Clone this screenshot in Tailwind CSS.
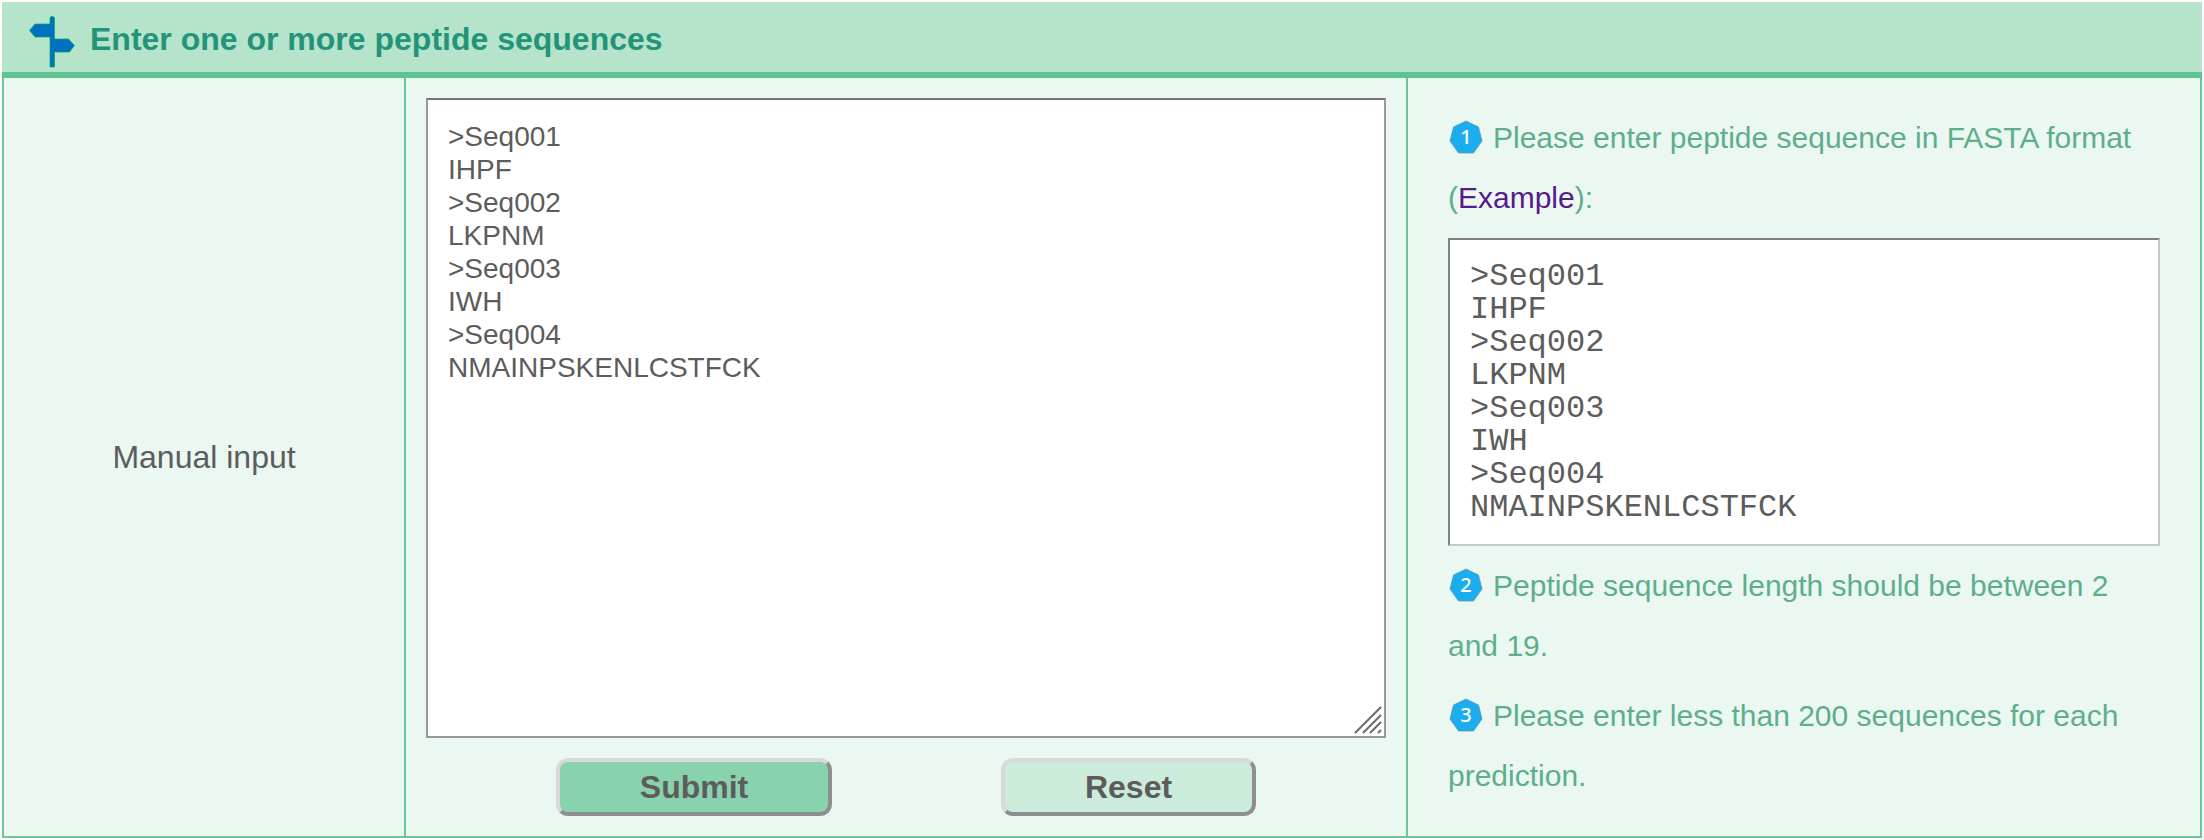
<!DOCTYPE html>
<html lang="en">
<head>
  <meta charset="UTF-8" />
  <meta name="viewport" content="width=device-width, initial-scale=1.0" />
  <title>Peptide sequence input</title>
  <script src="https://cdn.jsdelivr.net/npm/@tailwindcss/browser@4"></script>
</head>
<body class="bg-white p-[2px] font-['Liberation_Sans',Arial,sans-serif] text-[#5c5c5c]">
  <form onsubmit="return false">
    <!-- Header -->
    <header class="flex items-center gap-[14px] h-[76px] pl-6 bg-[#b5e4ca] border-b-[6px] border-[#5fc48f]">
      <svg class="w-[50px] h-[54px] mt-2" viewBox="0 0 50 54" fill="#0070c0" stroke="#00b050" stroke-width="0.7">
        <path d="M24 3.500L26 2L28.500 3.500V25H42.500L48.500 31.500L43.500 38H28.500V53H24V23H9L3.500 16.500L9 10H24Z" />
      </svg>
      <h1 class="pt-[3px] text-[32px] leading-9 font-bold text-[#24937b]">Enter one or more peptide sequences</h1>
    </header>

    <div class="grid grid-cols-[402px_1fr_792px] bg-[#eaf8f1] border-2 border-t-0 border-[#68c898]">
      <div class="flex items-center justify-center border-r-2 border-[#68c898]">
        <label for="sequences" class="text-[32px] leading-9">Manual input</label>
      </div>

      <!-- Sequence input -->
      <div class="flex flex-col gap-5 p-5 border-r-2 border-[#68c898]">
        <div class="relative flex">
          <textarea id="sequences" spellcheck="false" class="w-full h-[640px] p-5 resize-none bg-white border-2 border-[#999] border-t-[#767676] text-[28px] leading-[33px]">&gt;Seq001
IHPF
&gt;Seq002
LKPNM
&gt;Seq003
IWH
&gt;Seq004
NMAINPSKENLCSTFCK</textarea>
          <svg class="absolute right-1 bottom-1 w-7 h-7" viewBox="0 0 28 28" stroke="#6b6b6b" stroke-width="2">
            <path d="M1 27L27 1M9 27L27 9M16 27L27 16M24 27L27 24" />
          </svg>
        </div>
        <div class="flex justify-center gap-[169px]">
          <button type="submit" class="w-[276px] h-[58px] rounded-xl border-4 border-t-[#d9d9d9] border-l-[#d9d9d9] border-r-[#8f8f8f] border-b-[#8f8f8f] bg-[#88d3ad] text-[32px] leading-9 font-bold">Submit</button>
          <button type="reset" class="w-[255px] h-[58px] rounded-xl border-4 border-t-[#d9d9d9] border-l-[#d9d9d9] border-r-[#8f8f8f] border-b-[#8f8f8f] bg-[#cbecdb] text-[32px] leading-9 font-bold">Reset</button>
        </div>
      </div>

      <!-- Instructions -->
      <div class="flex flex-col gap-[10px] px-10 py-[30px] text-[30px] leading-[60px] text-[#5fae8b]">
        <p>
          <svg class="inline-block w-9 h-9 mr-[9px] align-[-7px]" viewBox="0 0 36 36">
            <path d="M18 2L30.500 8L34 22L25.500 34H10.500L2 22L5.500 8Z" fill="#1cadee" stroke="#5b8fae" stroke-width="0.7" />
            <text x="18" y="25" text-anchor="middle" font-family="Noto Sans" font-size="20" font-weight="500" fill="#fff">1</text>
          </svg>Please enter peptide sequence in FASTA format (<a href="#example" class="text-[#551a8b]">Example</a>):
        </p>
        <pre id="example" class="p-5 bg-white border-2 border-t-[#808080] border-l-[#808080] border-r-[#c4c8c8] border-b-[#c4c8c8] font-['Liberation_Mono',monospace] text-[32px] leading-[33px] text-[#5c5c5c]">&gt;Seq001
IHPF
&gt;Seq002
LKPNM
&gt;Seq003
IWH
&gt;Seq004
NMAINPSKENLCSTFCK</pre>
        <p>
          <svg class="inline-block w-9 h-9 mr-[9px] align-[-7px]" viewBox="0 0 36 36">
            <path d="M18 2L30.500 8L34 22L25.500 34H10.500L2 22L5.500 8Z" fill="#1cadee" stroke="#5b8fae" stroke-width="0.7" />
            <text x="18" y="25" text-anchor="middle" font-family="Noto Sans" font-size="20" font-weight="500" fill="#fff">2</text>
          </svg>Peptide sequence length should be between 2 and 19.
        </p>
        <p>
          <svg class="inline-block w-9 h-9 mr-[9px] align-[-7px]" viewBox="0 0 36 36">
            <path d="M18 2L30.500 8L34 22L25.500 34H10.500L2 22L5.500 8Z" fill="#1cadee" stroke="#5b8fae" stroke-width="0.7" />
            <text x="18" y="25" text-anchor="middle" font-family="Noto Sans" font-size="20" font-weight="500" fill="#fff">3</text>
          </svg>Please enter less than 200 sequences for each prediction.
        </p>
      </div>
    </div>
  </form>
</body>
</html>
